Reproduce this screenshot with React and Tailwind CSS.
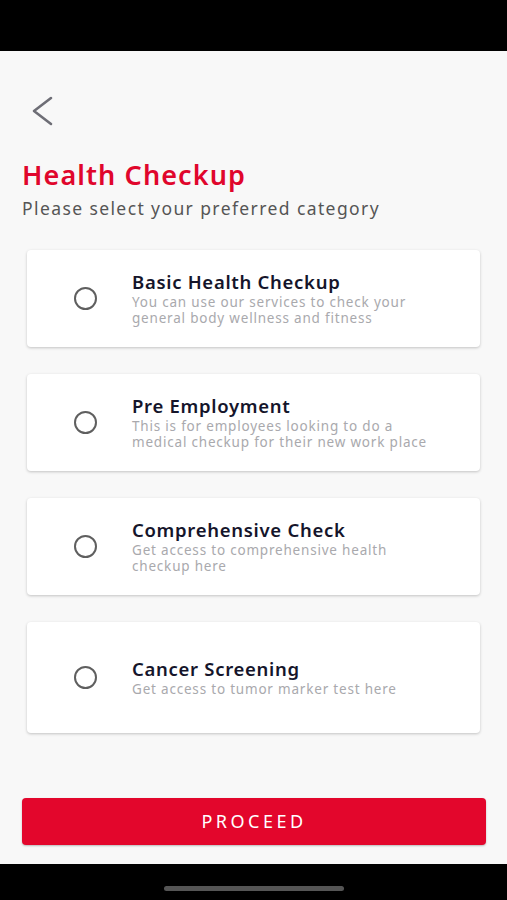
import React, { useState } from 'react';

const options = [
  { title: 'Basic Health Checkup', desc: 'You can use our services to check your general body wellness and fitness', h: 'h-[97px]' },
  { title: 'Pre Employment', desc: 'This is for employees looking to do a medical checkup for their new work place', h: 'h-[97px]' },
  { title: 'Comprehensive Check', desc: 'Get access to comprehensive health checkup here', h: 'h-[97px]' },
  { title: 'Cancer Screening', desc: 'Get access to tumor marker test here', h: 'h-[111px]' },
];

const App = () => {
  const [selected, setSelected] = useState(null);

  return (
    <div className="w-[507px] h-[900px] flex flex-col bg-black font-['Noto_Sans','Open_Sans',sans-serif]">
      {/* Status bar */}
      <div className="h-[51px] bg-black"></div>

      <div className="flex-1 bg-[#f8f8f8] flex flex-col">
        {/* Back */}
        <div className="pl-[31px] pt-[45px] h-[97px]">
          <svg width="24" height="30" viewBox="0 0 24 30" fill="none">
            <path d="M20 2 L3 15 L20 28" stroke="#6e6e76" strokeWidth="2.6" strokeLinecap="round" strokeLinejoin="round" />
          </svg>
        </div>

        <div className="px-[22px] pt-[10px]">
          <h1 className="text-[27px] leading-[34px] font-semibold text-[#e0062c] tracking-[1.1px]">Health Checkup</h1>
          <p className="text-[17.5px] leading-[26px] text-[#555555] mt-[3px] tracking-[1.4px]">Please select your preferred category</p>
        </div>

        <div className="flex flex-col gap-[27px] pl-[27px] pr-[27px] mt-[29px]">
          {options.map((o, i) => (
            <button
              key={o.title}
              onClick={() => setSelected(i)}
              className={`${o.h} w-[453px] bg-white rounded-[4px] shadow-[0_1px_3px_rgba(0,0,0,0.22)] flex items-center text-left`}
            >
              <span className="ml-[47px] mr-[35px] shrink-0 w-[23px] h-[23px] rounded-full border-2 border-[#5f5f5f] flex items-center justify-center">
                {selected === i && <span className="w-[11px] h-[11px] rounded-full bg-[#e0062c]"></span>}
              </span>
              <div className="w-[300px]">
                <div className="text-[18.5px] leading-[22px] font-semibold text-[#15152b] tracking-[0.7px]">{o.title}</div>
                <div className="text-[13.5px] leading-[16px] text-[#a9a9ad] mt-[1px] tracking-[0.8px]">{o.desc}</div>
              </div>
            </button>
          ))}
        </div>

        <div className="flex-1"></div>

        <div className="px-[22px] pb-[19px]">
          <button className="w-[464px] h-[47px] bg-[#e3062c] rounded-[4px] shadow-[0_1px_2px_rgba(0,0,0,0.25)] text-white text-[18px] tracking-[3.5px] font-['Noto_Sans',sans-serif]">
            PROCEED
          </button>
        </div>
      </div>

      {/* Nav bar */}
      <div className="h-[36px] bg-black flex items-center justify-center">
        <div className="w-[180px] h-[5px] rounded-full bg-[#555555] mt-[12px]"></div>
      </div>
    </div>
  );
};

export default App;
